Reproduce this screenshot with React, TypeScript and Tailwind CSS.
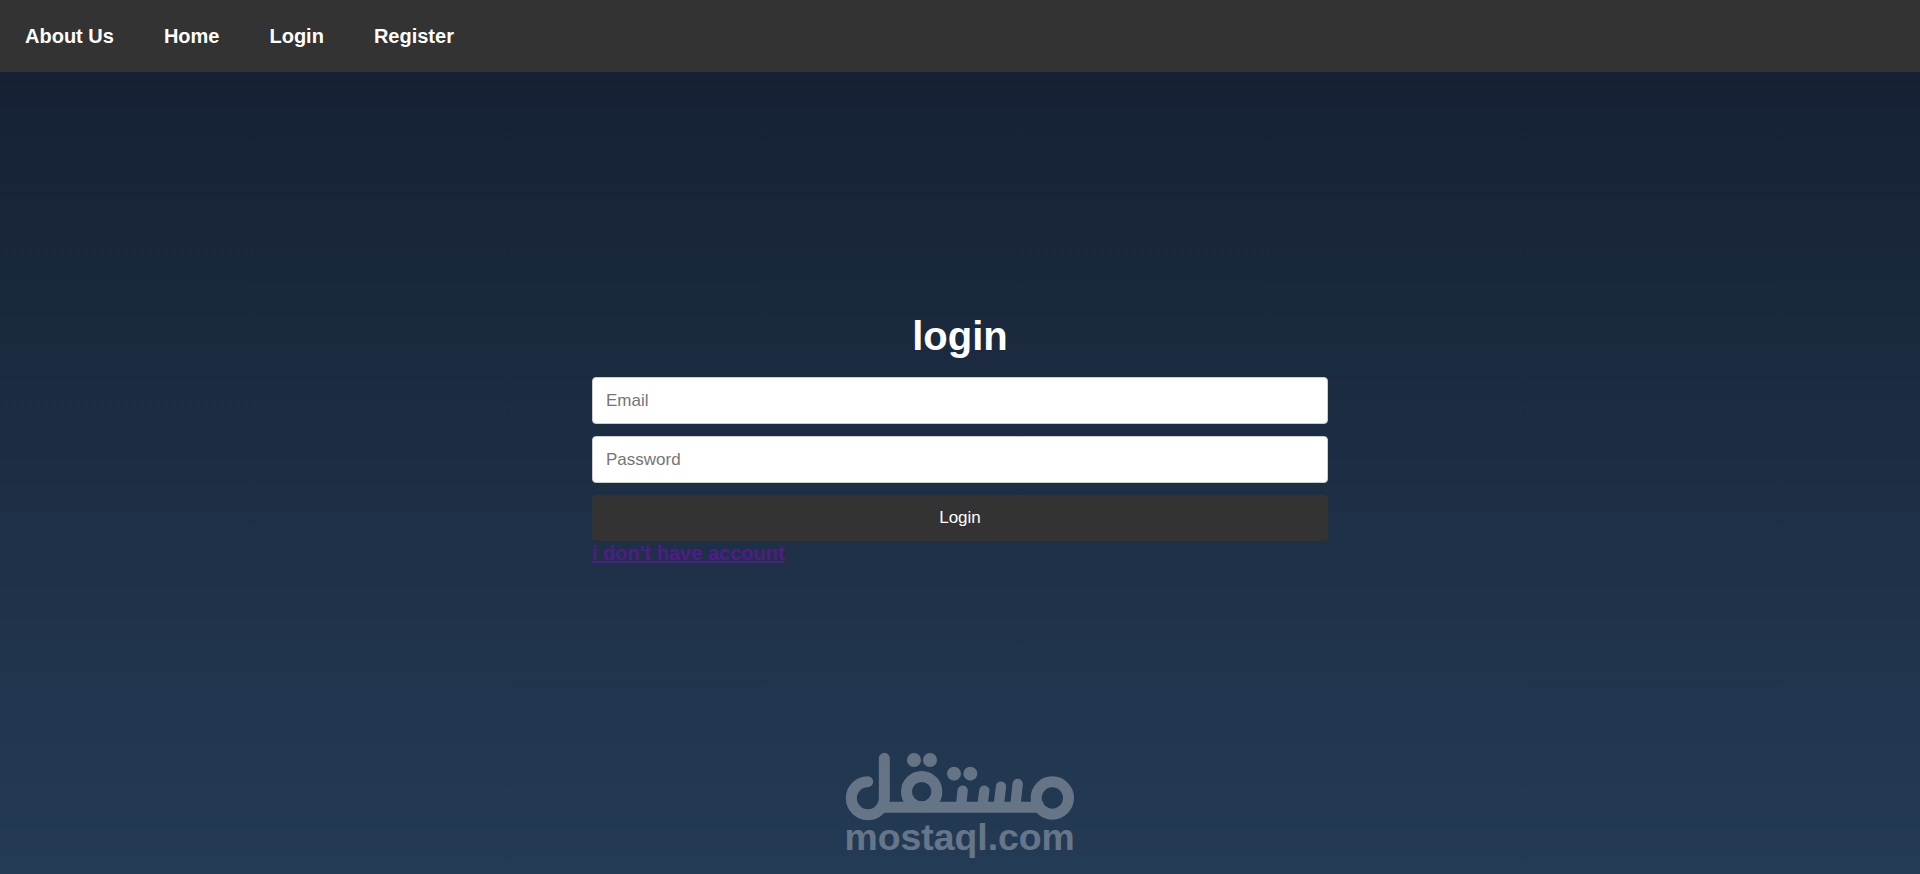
import { useState } from "react";

const links = ["About Us", "Home", "Login", "Register"];

const inputClass =
  "h-[47px] w-full rounded-sm border border-[#ccc] bg-white px-[13px] text-[17px] text-black placeholder:text-[#757575] outline-none";

function Navbar() {
  return (
    <nav className="flex h-[72px] items-center gap-[50px] bg-[#333] px-[25px]">
      {links.map((link) => (
        <a key={link} href="#" className="text-xl leading-6 font-bold text-white">
          {link}
        </a>
      ))}
    </nav>
  );
}

function Watermark() {
  return (
    <svg
      viewBox="0 -2 780 402"
      className="pointer-events-none absolute bottom-0 left-1/2 w-[260px] -translate-x-1/2"
      role="img"
      aria-label="mostaql.com"
    >
      <g opacity="0.3">
        <g fill="none" stroke="#fff" strokeWidth="33" strokeLinecap="round" strokeLinejoin="round">
          {/* lam */}
          <path d="M113 123 A49.5 49.5 0 1 0 163 172.5 V53" />
          {/* baseline */}
          <path d="M152 199.5 H640" strokeLinecap="butt" />
          {/* qaf */}
          <circle cx="275" cy="153" r="45.5" />
          {/* teeth */}
          <path strokeWidth="31" d="M398 150 L393 196 M463 150 L457 196 M513 138 L506 196 M563 130 L556 196" />
          {/* meem */}
          <circle cx="667" cy="172" r="48.5" />
        </g>
        <g fill="#fff">
          <circle cx="252" cy="58" r="21" />
          <circle cx="300" cy="58" r="21" />
          <circle cx="372" cy="99" r="21" />
          <circle cx="421" cy="99" r="21" />
          <text
            x="389"
            y="327"
            fontSize="112"
            fontWeight="700"
            textAnchor="middle"
            className="font-['Liberation_Sans',Arial,sans-serif]"
          >
            mostaql.com
          </text>
        </g>
      </g>
    </svg>
  );
}

export default function App() {
  const [email, setEmail] = useState("");
  const [password, setPassword] = useState("");

  return (
    <div className="relative flex min-h-screen flex-col bg-linear-to-b/srgb from-[#141e30] to-[#243b55] font-['Liberation_Sans',Arial,sans-serif]">
      <Navbar />

      <main className="flex flex-1 flex-col items-center justify-center pb-[68px]">
        <form className="w-2/5 px-4" onSubmit={(e) => e.preventDefault()}>
          <h1 className="mb-[18px] text-center text-[40px] leading-[46px] font-bold text-white">login</h1>
          <div className="flex flex-col gap-3">
            <input
              type="email"
              aria-label="Email"
              placeholder="Email"
              value={email}
              onChange={(e) => setEmail(e.target.value)}
              className={inputClass}
            />
            <input
              type="password"
              aria-label="Password"
              placeholder="Password"
              value={password}
              onChange={(e) => setPassword(e.target.value)}
              className={inputClass}
            />
            <button type="submit" className="h-[46px] w-full rounded-sm bg-[#333] text-[17px] text-white">
              Login
            </button>
          </div>
          <a href="#" className="block w-fit text-xl leading-6 font-bold text-[#4f1c88] underline">
            i don't have account
          </a>
        </form>
      </main>

      <Watermark />
    </div>
  );
}
